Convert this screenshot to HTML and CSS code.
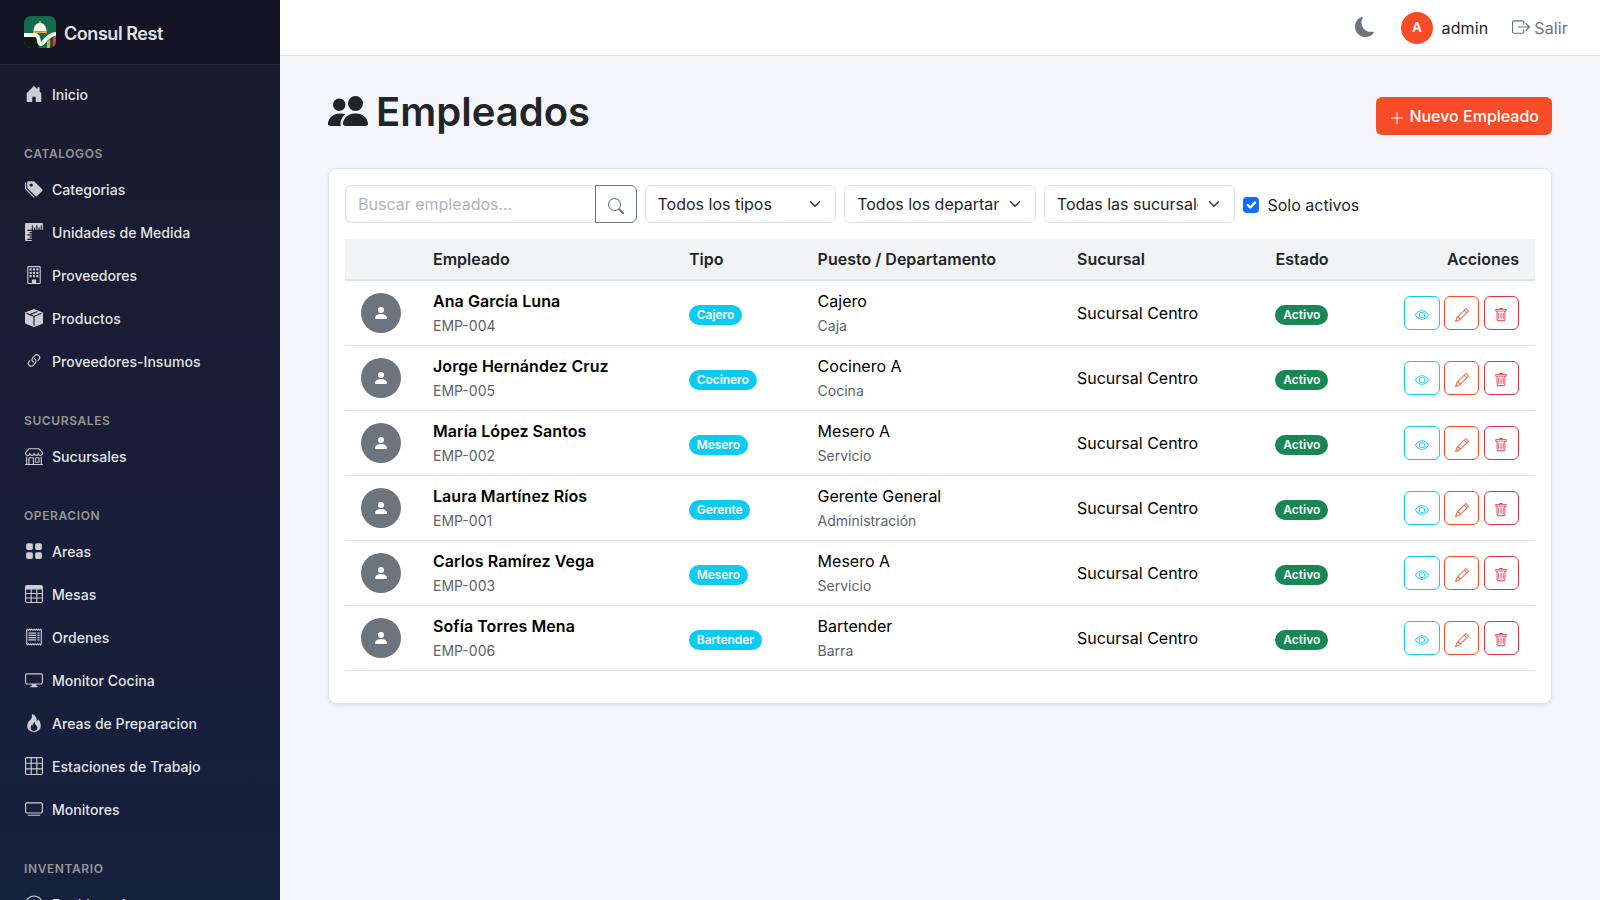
FILE: index.html
```html
<!DOCTYPE html>
<html lang="es">
  <head>
    <meta charset="UTF-8" />
    <meta name="viewport" content="width=device-width, initial-scale=1.0" />
    <title>Empleados - Consul Rest</title>
    <link rel="stylesheet" href="styles.css">
  </head>
  <body>
    <svg class="sprite" viewBox="0 0 16 16">
      <symbol id="i-house" viewBox="0 0 16 16"><path d="M6.5 14.5v-3.505c0-.245.25-.495.5-.495h2c.25 0 .5.25.5.5v3.5a.5.5 0 0 0 .5.5h4a.5.5 0 0 0 .5-.5v-7a.5.5 0 0 0-.146-.354L13 5.793V2.5a.5.5 0 0 0-.5-.5h-1a.5.5 0 0 0-.5.5v1.293L8.354 1.146a.5.5 0 0 0-.708 0l-6 6A.5.5 0 0 0 1.5 7.5v7a.5.5 0 0 0 .5.5h4a.5.5 0 0 0 .5-.5"/></symbol>
      <symbol id="i-tags" viewBox="0 0 16 16"><path d="M2 2a1 1 0 0 1 1-1h4.586a1 1 0 0 1 .707.293l7 7a1 1 0 0 1 0 1.414l-4.586 4.586a1 1 0 0 1-1.414 0l-7-7A1 1 0 0 1 2 6.586zm3.5 4a1.5 1.5 0 1 0 0-3 1.5 1.5 0 0 0 0 3"/><path d="M1.293 7.793A1 1 0 0 1 1 7.086V2a1 1 0 0 0-1 1v4.586a1 1 0 0 0 .293.707l7 7a1 1 0 0 0 1.414 0l.043-.043z"/></symbol>
      <symbol id="i-rulers" viewBox="0 0 16 16"><path d="M1 0a1 1 0 0 0-1 1v14a1 1 0 0 0 1 1h5v-1H2v-1h4v-1H4v-1h2v-1H2v-1h4V9H4V8h2V7H2V6h4V2h1v4h1V4h1v2h1V2h1v4h1V4h1v2h1V2h1v4h1V1a1 1 0 0 0-1-1z"/></symbol>
      <symbol id="i-building" viewBox="0 0 16 16"><path d="M4.500 2h1a.5.5 0 0 1 .5.5v1a.5.5 0 0 1-.5.5h-1a.5.5 0 0 1-.5-.5v-1a.5.5 0 0 1 .5-.5m3 0h1a.5.5 0 0 1 .5.5v1a.5.5 0 0 1-.5.5h-1a.5.5 0 0 1-.5-.5v-1a.5.5 0 0 1 .5-.5m3 0h1a.5.5 0 0 1 .5.5v1a.5.5 0 0 1-.5.5h-1a.5.5 0 0 1-.5-.5v-1a.5.5 0 0 1 .5-.5m-6 3h1a.5.5 0 0 1 .5.5v1a.5.5 0 0 1-.5.5h-1a.5.5 0 0 1-.5-.5v-1a.5.5 0 0 1 .5-.5m3 0h1a.5.5 0 0 1 .5.5v1a.5.5 0 0 1-.5.5h-1a.5.5 0 0 1-.5-.5v-1a.5.5 0 0 1 .5-.5m3 0h1a.5.5 0 0 1 .5.5v1a.5.5 0 0 1-.5.5h-1a.5.5 0 0 1-.5-.5v-1a.5.5 0 0 1 .5-.5m-6 3h1a.5.5 0 0 1 .5.5v1a.5.5 0 0 1-.5.5h-1a.5.5 0 0 1-.5-.5v-1a.5.5 0 0 1 .5-.5m3 0h1a.5.5 0 0 1 .5.5v1a.5.5 0 0 1-.5.5h-1a.5.5 0 0 1-.5-.5v-1a.5.5 0 0 1 .5-.5m3 0h1a.5.5 0 0 1 .5.5v1a.5.5 0 0 1-.5.5h-1a.5.5 0 0 1-.5-.5v-1a.5.5 0 0 1 .5-.5"/><path d="M2 1a1 1 0 0 1 1-1h10a1 1 0 0 1 1 1v14a1 1 0 0 1-1 1H3a1 1 0 0 1-1-1zm11 0H3v14h3v-2.500a.5.5 0 0 1 .5-.5h3a.5.5 0 0 1 .5.5V15h3z"/></symbol>
      <symbol id="i-box" viewBox="0 0 16 16"><path fill-rule="evenodd" d="M15.528 2.973a.75.75 0 0 1 .472.696v8.662a.75.75 0 0 1-.472.696l-7.25 2.9a.75.75 0 0 1-.557 0l-7.25-2.9A.75.75 0 0 1 0 12.331V3.669a.75.75 0 0 1 .471-.696L7.443.184l.01-.003.268-.108a.75.75 0 0 1 .558 0l.269.108.01.003zM10.404 2 4.25 4.461 1.846 3.5 1 3.839v.4l6.5 2.6v7.922l.5.2.5-.2V6.84l6.5-2.6v-.4l-.846-.339L8 5.961 5.596 5l6.154-2.461z"/></symbol>
      <symbol id="i-link" viewBox="0 0 16 16"><path d="M4.715 6.542 3.343 7.914a3 3 0 1 0 4.243 4.243l1.828-1.829A3 3 0 0 0 8.586 5.5L8 6.086a1 1 0 0 0-.154.199 2 2 0 0 1 .861 3.337L6.88 11.45a2 2 0 1 1-2.83-2.83l.793-.792a4 4 0 0 1-.128-1.287z"/><path d="M6.586 4.672A3 3 0 0 0 7.414 9.5l.775-.776a2 2 0 0 1-.896-3.346L9.12 3.55a2 2 0 1 1 2.83 2.83l-.793.792c.112.42.155.855.128 1.287l1.372-1.372a3 3 0 1 0-4.243-4.243z"/></symbol>
      <symbol id="i-shop" viewBox="0 0 16 16"><path d="M2.97 1.35A1 1 0 0 1 3.73 1h8.54a1 1 0 0 1 .76.35l2.609 3.044A1.5 1.5 0 0 1 16 5.37v.255a2.375 2.375 0 0 1-4.25 1.458A2.37 2.37 0 0 1 9.875 8 2.37 2.37 0 0 1 8 7.083 2.37 2.37 0 0 1 6.125 8a2.37 2.37 0 0 1-1.875-.917A2.375 2.375 0 0 1 0 5.625V5.37a1.5 1.5 0 0 1 .361-.976zm1.78 4.275a1.375 1.375 0 0 0 2.75 0 .5.5 0 0 1 1 0 1.375 1.375 0 0 0 2.75 0 .5.5 0 0 1 1 0 1.375 1.375 0 1 0 2.75 0V5.37a.5.5 0 0 0-.12-.325L12.27 2H3.73L1.12 5.045A.5.5 0 0 0 1 5.37v.255a1.375 1.375 0 0 0 2.75 0 .5.5 0 0 1 1 0M1.5 8.5A.5.5 0 0 1 2 9v6h1v-5a1 1 0 0 1 1-1h3a1 1 0 0 1 1 1v5h6V9a.5.5 0 0 1 1 0v6h.5a.5.5 0 0 1 0 1H.5a.5.5 0 0 1 0-1H1V9a.5.5 0 0 1 .5-.5M4 15h3v-5H4zm5-5a1 1 0 0 1 1-1h2a1 1 0 0 1 1 1v3a1 1 0 0 1-1 1h-2a1 1 0 0 1-1-1zm3 0h-2v3h2z"/></symbol>
      <symbol id="i-grid" viewBox="0 0 16 16"><path d="M1 2.5A1.5 1.5 0 0 1 2.5 1h3A1.5 1.5 0 0 1 7 2.5v3A1.5 1.5 0 0 1 5.5 7h-3A1.5 1.5 0 0 1 1 5.5zm8 0A1.5 1.5 0 0 1 10.5 1h3A1.5 1.5 0 0 1 15 2.5v3A1.5 1.5 0 0 1 13.5 7h-3A1.5 1.5 0 0 1 9 5.5zm-8 8A1.5 1.5 0 0 1 2.5 9h3A1.5 1.5 0 0 1 7 10.5v3A1.5 1.5 0 0 1 5.5 15h-3A1.5 1.5 0 0 1 1 13.5zm8 0A1.5 1.5 0 0 1 10.5 9h3a1.5 1.5 0 0 1 1.5 1.5v3a1.5 1.5 0 0 1-1.5 1.5h-3A1.5 1.5 0 0 1 9 13.5z"/></symbol>
      <symbol id="i-table" viewBox="0 0 16 16"><path d="M0 2a2 2 0 0 1 2-2h12a2 2 0 0 1 2 2v12a2 2 0 0 1-2 2H2a2 2 0 0 1-2-2zm15 2h-4v3h4zm0 4h-4v3h4zm0 4h-4v3h3a1 1 0 0 0 1-1zm-5 3v-3H6v3zm-5 0v-3H1v2a1 1 0 0 0 1 1zm-4-4h4V8H1zm0-4h4V4H1zm5-3v3h4V4zm4 4H6v3h4z"/></symbol>
      <symbol id="i-receipt" viewBox="0 0 16 16"><path d="M1.92.506a.5.5 0 0 1 .434.14L3 1.293l.646-.647a.5.5 0 0 1 .708 0L5 1.293l.646-.647a.5.5 0 0 1 .708 0L7 1.293l.646-.647a.5.5 0 0 1 .708 0L9 1.293l.646-.647a.5.5 0 0 1 .708 0l.646.647.646-.647a.5.5 0 0 1 .708 0l.646.647.646-.647a.5.5 0 0 1 .801.13l.5 1A.5.5 0 0 1 15 2v12a.5.5 0 0 1-.053.224l-.5 1a.5.5 0 0 1-.8.13L13 14.707l-.646.647a.5.5 0 0 1-.708 0L11 14.707l-.646.647a.5.5 0 0 1-.708 0L9 14.707l-.646.647a.5.5 0 0 1-.708 0L7 14.707l-.646.647a.5.5 0 0 1-.708 0L5 14.707l-.646.647a.5.5 0 0 1-.708 0L3 14.707l-.646.647a.5.5 0 0 1-.801-.13l-.5-1A.5.5 0 0 1 1 14V2a.5.5 0 0 1 .053-.224l.5-1a.5.5 0 0 1 .367-.27m.217 1.338L2 2.118v11.764l.137.274.51-.51a.5.5 0 0 1 .707 0l.646.647.646-.646a.5.5 0 0 1 .708 0l.646.646.646-.646a.5.5 0 0 1 .708 0l.646.646.646-.646a.5.5 0 0 1 .708 0l.646.646.646-.646a.5.5 0 0 1 .708 0l.646.646.646-.646a.5.5 0 0 1 .708 0l.509.509.137-.274V2.118l-.137-.274-.51.51a.5.5 0 0 1-.707 0L12 1.707l-.646.647a.5.5 0 0 1-.708 0L10 1.707l-.646.647a.5.5 0 0 1-.708 0L8 1.707l-.646.647a.5.5 0 0 1-.708 0L6 1.707l-.646.647a.5.5 0 0 1-.708 0L4 1.707l-.646.647a.5.5 0 0 1-.708 0z"/><path d="M3 4h7v1H3zM3 6h7v1H3zM3 8h7v1H3zM3 10h7v1H3zM11 4h2v1h-2zM11 6h2v1h-2zM11 8h2v1h-2zM11 10h2v1h-2z"/></symbol>
      <symbol id="i-display" viewBox="0 0 16 16"><path d="M0 4s0-2 2-2h12s2 0 2 2v6s0 2-2 2h-4q0 1 .25 1.5H11a.5.5 0 0 1 0 1H5a.5.5 0 0 1 0-1h.75Q6 13 6 12H2s-2 0-2-2zm1.398-.855a.76.76 0 0 0-.254.302A1.5 1.5 0 0 0 1 4.01V10c0 .325.078.502.145.602q.105.156.302.254a1.5 1.5 0 0 0 .538.143L2.01 11H14c.325 0 .502-.078.602-.145a.76.76 0 0 0 .254-.302 1.5 1.5 0 0 0 .143-.538L15 9.99V4c0-.325-.078-.502-.145-.602a.76.76 0 0 0-.302-.254A1.5 1.5 0 0 0 13.99 3H2c-.325 0-.502.078-.602.145"/></symbol>
      <symbol id="i-fire" viewBox="0 0 16 16"><path d="M8 16c3.314 0 6-2 6-5.5 0-1.5-.5-4-2.5-6 .25 1.5-1.25 2-1.25 2C11 4 9 .5 6 0c.357 2 .5 4-2 6-1.25 1-2 2.729-2 4.5C2 14 4.686 16 8 16m0-1c-1.657 0-3-1-3-2.75 0-.75.25-2 1.25-3C6.125 10 7 10.5 7 10.5c-.375-1.25.5-3.25 2-3.5-.179 1-.25 2 1 3 .625.5 1 1.364 1 2.25C11 14 9.657 15 8 15"/></symbol>
      <symbol id="i-grid3" viewBox="0 0 16 16"><path d="M0 1.5A1.5 1.5 0 0 1 1.5 0h13A1.5 1.5 0 0 1 16 1.5v13a1.5 1.5 0 0 1-1.5 1.5h-13A1.5 1.5 0 0 1 0 14.5zM1.500 1a.5.5 0 0 0-.5.5V5h4V1zM5 6H1v4h4zm1 4h4V6H6zm-1 1H1v3.500a.5.5 0 0 0 .5.5H5zm1 0v4h4v-4zm5 0v4h3.500a.5.5 0 0 0 .5-.5V11zm0-1h4V6h-4zm0-5h4V1.500a.5.5 0 0 0-.5-.5H11zm-1 0V1H6v4z"/></symbol>
      <symbol id="i-tv" viewBox="0 0 16 16"><path d="M2.5 13.5A.5.5 0 0 1 3 13h10a.5.5 0 0 1 0 1H3a.5.5 0 0 1-.5-.5M13.991 3l.024.001a1.5 1.5 0 0 1 .538.143.76.76 0 0 1 .302.254c.067.1.145.277.145.602v5.991l-.001.024a1.5 1.5 0 0 1-.143.538.76.76 0 0 1-.254.302c-.1.067-.277.145-.602.145H2.009l-.024-.001a1.5 1.5 0 0 1-.538-.143.76.76 0 0 1-.302-.254C1.078 10.502 1 10.325 1 10V4.009l.001-.024a1.5 1.5 0 0 1 .143-.538.76.76 0 0 1 .254-.302C1.498 3.078 1.675 3 2 3zM14 2H2C0 2 0 4 0 4v6c0 2 2 2 2 2h12c2 0 2-2 2-2V4c0-2-2-2-2-2"/></symbol>
      <symbol id="i-speed" viewBox="0 0 16 16"><path d="M8 4v2M4 6l.9.9M2.500 10.500H4M12 10.500h1.600M8 10.500l3.600-4M3.500 13.800C2 12.800 1 11.500.7 9.500a7.400 7.400 0 1 1 14.600 0c-.3 2-1.300 3.300-2.800 4.300-2.500-1.600-6.500-1.600-9 0z" fill="none" stroke="currentColor"/></symbol>
      <symbol id="i-people" viewBox="0 0 16 16"><path d="M7 14s-1 0-1-1 1-4 5-4 5 3 5 4-1 1-1 1zm4-6a3 3 0 1 0 0-6 3 3 0 0 0 0 6m-5.784 6A2.24 2.24 0 0 1 5 13c0-1.355.68-2.75 1.936-3.72A6.3 6.3 0 0 0 5 9c-4 0-5 3-5 4s1 1 1 1zM4.500 8a2.500 2.500 0 1 0 0-5 2.500 2.500 0 0 0 0 5"/></symbol>
      <symbol id="i-person" viewBox="0 0 16 16"><path d="M3 14s-1 0-1-1 1-4 6-4 6 3 6 4-1 1-1 1zm5-6a3 3 0 1 0 0-6 3 3 0 0 0 0 6"/></symbol>
      <symbol id="i-moon" viewBox="0 0 16 16"><path d="M6 .278a.77.77 0 0 1 .08.858 7.2 7.2 0 0 0-.878 3.46c0 4.021 3.278 7.277 7.318 7.277q.792-.001 1.533-.16a.79.79 0 0 1 .81.316.73.73 0 0 1-.031.893A8.35 8.35 0 0 1 8.344 16C3.734 16 0 12.286 0 7.71 0 4.266 2.114 1.312 5.124.06A.75.75 0 0 1 6 .278"/></symbol>
      <symbol id="i-exit" viewBox="0 0 16 16"><path d="M10 12.500a.5.5 0 0 1-.5.5h-8a.5.5 0 0 1-.5-.5v-9a.5.5 0 0 1 .5-.5h8a.5.5 0 0 1 .5.5v2a.5.5 0 0 0 1 0v-2A1.500 1.500 0 0 0 9.500 2h-8A1.500 1.500 0 0 0 0 3.500v9A1.500 1.500 0 0 0 1.500 14h8a1.500 1.500 0 0 0 1.500-1.500v-2a.5.5 0 0 0-1 0z"/><path d="M15.854 8.354a.5.5 0 0 0 0-.708l-3-3a.5.5 0 0 0-.708.708L14.293 7.500H5.500a.5.5 0 0 0 0 1h8.793l-2.147 2.146a.5.5 0 0 0 .708.708z"/></symbol>
      <symbol id="i-plus" viewBox="0 0 16 16"><path d="M8 2a.5.5 0 0 1 .5.5v5h5a.5.5 0 0 1 0 1h-5v5a.5.5 0 0 1-1 0v-5h-5a.5.5 0 0 1 0-1h5v-5A.5.5 0 0 1 8 2"/></symbol>
      <symbol id="i-search" viewBox="0 0 16 16"><path d="M11.742 10.344a6.500 6.500 0 1 0-1.397 1.398h-.001q.044.06.098.115l3.850 3.850a1 1 0 0 0 1.415-1.414l-3.850-3.850a1 1 0 0 0-.115-.100zM12 6.500a5.500 5.500 0 1 1-11 0 5.500 5.500 0 0 1 11 0"/></symbol>
      <symbol id="i-eye" viewBox="0 0 16 16"><path d="M16 8s-3-5.500-8-5.500S0 8 0 8s3 5.500 8 5.500S16 8 16 8M1.173 8a13 13 0 0 1 1.660-2.043C4.120 4.668 5.880 3.500 8 3.500s3.879 1.168 5.168 2.457A13 13 0 0 1 14.828 8q-.086.130-.195.288c-.335.480-.830 1.120-1.465 1.755C11.879 11.332 10.119 12.500 8 12.500s-3.879-1.168-5.168-2.457A13 13 0 0 1 1.172 8z"/><path d="M8 5.500a2.500 2.500 0 1 0 0 5 2.500 2.500 0 0 0 0-5M4.500 8a3.500 3.500 0 1 1 7 0 3.500 3.500 0 0 1-7 0"/></symbol>
      <symbol id="i-pencil" viewBox="0 0 16 16"><path d="M12.146.146a.5.5 0 0 1 .708 0l3 3a.5.5 0 0 1 0 .708l-10 10a.5.5 0 0 1-.168.110l-5 2a.5.5 0 0 1-.650-.650l2-5a.5.5 0 0 1 .110-.168zM11.207 2.500 13.500 4.793 14.793 3.500 12.500 1.207zm1.586 3L10.500 3.207 4 9.707V10h.5a.5.5 0 0 1 .5.5v.5h.5a.5.5 0 0 1 .5.5v.5h.293zm-9.761 5.175-.106.106-1.528 3.821 3.821-1.528.106-.106A.5.5 0 0 1 5 12.500V12h-.5a.5.5 0 0 1-.5-.5V11h-.5a.5.5 0 0 1-.468-.325"/></symbol>
      <symbol id="i-trash" viewBox="0 0 16 16"><path d="M5.500 5.500A.5.5 0 0 1 6 6v6a.5.5 0 0 1-1 0V6a.5.5 0 0 1 .5-.5m2.500 0a.5.5 0 0 1 .5.5v6a.5.5 0 0 1-1 0V6a.5.5 0 0 1 .5-.5m3 .5a.5.5 0 0 0-1 0v6a.5.5 0 0 0 1 0z"/><path d="M14.500 3a1 1 0 0 1-1 1H13v9a2 2 0 0 1-2 2H5a2 2 0 0 1-2-2V4h-.5a1 1 0 0 1-1-1V2a1 1 0 0 1 1-1H6a1 1 0 0 1 1-1h2a1 1 0 0 1 1 1h3.500a1 1 0 0 1 1 1zM4.118 4 4 4.059V13a1 1 0 0 0 1 1h6a1 1 0 0 0 1-1V4.059L11.882 4zM2.500 3h11V2h-11z"/></symbol>
    </svg>

    <aside class="sidebar">
      <a href="#" class="brand">
        <svg class="brand-logo" viewBox="0 0 32 32">
          <defs><clipPath id="logo-clip"><rect width="32" height="32" rx="7"/></clipPath></defs>
          <g clip-path="url(#logo-clip)">
            <rect width="32" height="32" fill="#116c4c"/>
            <path d="M0 20h12l3 12H0z" fill="#111a18"/>
            <path d="M23 26l3-3v9h-3z" fill="#e0a94a"/>
            <path d="M27 22.500l5-4V32h-5z" fill="#123d30"/>
            <path d="M28.500 21.500L32 18.500V31h-3.500z" fill="#d8432f"/>
            <path d="M9 15.300h14v1.700H9z" fill="#e0a94a"/>
            <circle cx="16" cy="6.500" r="1.300" fill="#e0a94a"/>
            <path d="M9.500 15c0-4.500 2.800-8 6.500-8s6.500 3.500 6.500 8z" fill="#fffaf0"/>
            <path d="M0 19h11c2.500 0 3 1.500 3.500 4 .8 5 1.800 6.500 4 4.200C22 23.500 25 18 32 17.800" fill="none" stroke="#fffaf0" stroke-width="3.800"/>
          </g>
        </svg>
        <span>Consul Rest</span>
      </a>
      <nav class="menu">
        <a href="#"><svg><use href="#i-house"/></svg>Inicio</a>
        <div class="menu-title">Catalogos</div>
        <a href="#"><svg><use href="#i-tags"/></svg>Categorias</a>
        <a href="#"><svg><use href="#i-rulers"/></svg>Unidades de Medida</a>
        <a href="#"><svg><use href="#i-building"/></svg>Proveedores</a>
        <a href="#"><svg><use href="#i-box"/></svg>Productos</a>
        <a href="#"><svg><use href="#i-link"/></svg>Proveedores-Insumos</a>
        <div class="menu-title">Sucursales</div>
        <a href="#"><svg><use href="#i-shop"/></svg>Sucursales</a>
        <div class="menu-title">Operacion</div>
        <a href="#"><svg><use href="#i-grid"/></svg>Areas</a>
        <a href="#"><svg><use href="#i-table"/></svg>Mesas</a>
        <a href="#"><svg><use href="#i-receipt"/></svg>Ordenes</a>
        <a href="#"><svg><use href="#i-display"/></svg>Monitor Cocina</a>
        <a href="#"><svg><use href="#i-fire"/></svg>Areas de Preparacion</a>
        <a href="#"><svg><use href="#i-grid3"/></svg>Estaciones de Trabajo</a>
        <a href="#"><svg><use href="#i-tv"/></svg>Monitores</a>
        <div class="menu-title">Inventario</div>
        <a href="#"><svg><use href="#i-speed"/></svg>Dashboard</a>
      </nav>
    </aside>

    <div class="page">
      <header class="topbar">
        <button class="theme-btn"><svg><use href="#i-moon"/></svg></button>
        <div class="user">
          <span class="user-avatar">A</span>
          <span>admin</span>
        </div>
        <a href="#" class="logout"><svg><use href="#i-exit"/></svg>Salir</a>
      </header>

      <main class="content">
        <div class="page-header">
          <h1><svg><use href="#i-people"/></svg>Empleados</h1>
          <button class="btn-new"><svg><use href="#i-plus"/></svg>Nuevo Empleado</button>
        </div>

        <div class="card">
          <div class="filters">
            <div class="search">
              <input type="text" placeholder="Buscar empleados..." />
              <button><svg><use href="#i-search"/></svg></button>
            </div>
            <select><option>Todos los tipos</option></select>
            <select><option>Todos los departamentos</option></select>
            <select><option>Todas las sucursales</option></select>
            <label class="check"><input type="checkbox" checked />Solo activos</label>
          </div>

          <table>
            <colgroup>
              <col class="col-avatar" />
              <col class="col-name" />
              <col class="col-type" />
              <col class="col-job" />
              <col class="col-branch" />
              <col class="col-status" />
              <col />
            </colgroup>
            <thead>
              <tr>
                <th></th>
                <th>Empleado</th>
                <th>Tipo</th>
                <th>Puesto / Departamento</th>
                <th>Sucursal</th>
                <th>Estado</th>
                <th class="right">Acciones</th>
              </tr>
            </thead>
            <tbody>
              <tr>
                <td><div class="avatar"><svg><use href="#i-person"/></svg></div></td>
                <td><strong>Ana García Luna</strong><br /><small>EMP-004</small></td>
                <td><span class="badge info">Cajero</span></td>
                <td>Cajero<br /><small>Caja</small></td>
                <td>Sucursal Centro</td>
                <td><span class="badge success">Activo</span></td>
                <td>
                  <div class="actions">
                    <button class="view"><svg><use href="#i-eye"/></svg></button>
                    <button class="edit"><svg><use href="#i-pencil"/></svg></button>
                    <button class="delete"><svg><use href="#i-trash"/></svg></button>
                  </div>
                </td>
              </tr>
              <tr>
                <td><div class="avatar"><svg><use href="#i-person"/></svg></div></td>
                <td><strong>Jorge Hernández Cruz</strong><br /><small>EMP-005</small></td>
                <td><span class="badge info">Cocinero</span></td>
                <td>Cocinero A<br /><small>Cocina</small></td>
                <td>Sucursal Centro</td>
                <td><span class="badge success">Activo</span></td>
                <td>
                  <div class="actions">
                    <button class="view"><svg><use href="#i-eye"/></svg></button>
                    <button class="edit"><svg><use href="#i-pencil"/></svg></button>
                    <button class="delete"><svg><use href="#i-trash"/></svg></button>
                  </div>
                </td>
              </tr>
              <tr>
                <td><div class="avatar"><svg><use href="#i-person"/></svg></div></td>
                <td><strong>María López Santos</strong><br /><small>EMP-002</small></td>
                <td><span class="badge info">Mesero</span></td>
                <td>Mesero A<br /><small>Servicio</small></td>
                <td>Sucursal Centro</td>
                <td><span class="badge success">Activo</span></td>
                <td>
                  <div class="actions">
                    <button class="view"><svg><use href="#i-eye"/></svg></button>
                    <button class="edit"><svg><use href="#i-pencil"/></svg></button>
                    <button class="delete"><svg><use href="#i-trash"/></svg></button>
                  </div>
                </td>
              </tr>
              <tr>
                <td><div class="avatar"><svg><use href="#i-person"/></svg></div></td>
                <td><strong>Laura Martínez Ríos</strong><br /><small>EMP-001</small></td>
                <td><span class="badge info">Gerente</span></td>
                <td>Gerente General<br /><small>Administración</small></td>
                <td>Sucursal Centro</td>
                <td><span class="badge success">Activo</span></td>
                <td>
                  <div class="actions">
                    <button class="view"><svg><use href="#i-eye"/></svg></button>
                    <button class="edit"><svg><use href="#i-pencil"/></svg></button>
                    <button class="delete"><svg><use href="#i-trash"/></svg></button>
                  </div>
                </td>
              </tr>
              <tr>
                <td><div class="avatar"><svg><use href="#i-person"/></svg></div></td>
                <td><strong>Carlos Ramírez Vega</strong><br /><small>EMP-003</small></td>
                <td><span class="badge info">Mesero</span></td>
                <td>Mesero A<br /><small>Servicio</small></td>
                <td>Sucursal Centro</td>
                <td><span class="badge success">Activo</span></td>
                <td>
                  <div class="actions">
                    <button class="view"><svg><use href="#i-eye"/></svg></button>
                    <button class="edit"><svg><use href="#i-pencil"/></svg></button>
                    <button class="delete"><svg><use href="#i-trash"/></svg></button>
                  </div>
                </td>
              </tr>
              <tr>
                <td><div class="avatar"><svg><use href="#i-person"/></svg></div></td>
                <td><strong>Sofía Torres Mena</strong><br /><small>EMP-006</small></td>
                <td><span class="badge info">Bartender</span></td>
                <td>Bartender<br /><small>Barra</small></td>
                <td>Sucursal Centro</td>
                <td><span class="badge success">Activo</span></td>
                <td>
                  <div class="actions">
                    <button class="view"><svg><use href="#i-eye"/></svg></button>
                    <button class="edit"><svg><use href="#i-pencil"/></svg></button>
                    <button class="delete"><svg><use href="#i-trash"/></svg></button>
                  </div>
                </td>
              </tr>
            </tbody>
          </table>
        </div>
      </main>
    </div>
  </body>
</html>
```

FILE: styles.css
```css
* {
  margin: 0;
  padding: 0;
  box-sizing: border-box;
}

body {
  display: flex;
  height: 100vh;
  overflow: hidden;
  font-family: Inter, "Liberation Sans", sans-serif;
  font-size: 16px;
  line-height: 1.5;
  color: #212529;
  background-color: #f4f6fb;
}

button,
input,
select {
  font: inherit;
  color: inherit;
}

a {
  text-decoration: none;
}

svg {
  width: 16px;
  height: 16px;
  flex-shrink: 0;
  fill: currentColor;
}

.sprite {
  display: none;
}

/* Sidebar */
.sidebar {
  width: 280px;
  height: 100vh;
  flex-shrink: 0;
  overflow: hidden;
  background: linear-gradient(180deg, #1a1a2e 0%, #16213e 100%);
}

.brand {
  display: flex;
  align-items: center;
  gap: 8px;
  height: 65px;
  padding: 0 24px;
  color: rgba(255, 255, 255, 0.9);
  font-size: 18px;
  font-weight: 600;
  letter-spacing: -0.45px;
  background-color: rgba(0, 0, 0, 0.2);
  border-bottom: 1px solid rgba(255, 255, 255, 0.1);
}

.brand span {
  padding-top: 2px;
}

.brand-logo {
  width: 32px;
  height: 32px;
}

.menu {
  padding-top: 8px;
}

.menu a {
  display: flex;
  align-items: center;
  gap: 9px;
  height: 43px;
  padding: 0 25px;
  color: rgba(255, 255, 255, 0.9);
  font-size: 14.08px;
  font-weight: 500;
}

.menu svg {
  width: 18px;
  height: 18px;
  margin-top: -2px;
  color: rgba(255, 255, 255, 0.78);
}

.menu-title {
  height: 52px;
  padding: 29px 24px 0;
  color: #969696;
  font-size: 12px;
  font-weight: 600;
  line-height: 18px;
  letter-spacing: 0.6px;
  text-transform: uppercase;
}

/* Topbar */
.page {
  flex: 1;
  min-width: 0;
}

.topbar {
  display: flex;
  justify-content: flex-end;
  align-items: center;
  height: 56px;
  padding: 0 32px;
  background-color: white;
  border-bottom: 1px solid #dee2e6;
}

.theme-btn {
  display: flex;
  margin-right: 26px;
  background: none;
  border: none;
  color: #6c757d;
}

.theme-btn svg {
  width: 20px;
  height: 20px;
  margin-top: -2px;
}

.user {
  display: flex;
  align-items: center;
  gap: 8.5px;
  margin-right: 24px;
  letter-spacing: 0.1px;
}

.user-avatar {
  display: flex;
  align-items: center;
  justify-content: center;
  width: 32px;
  height: 32px;
  border-radius: 50%;
  background-color: #f84b28;
  color: white;
  font-size: 13.6px;
  font-weight: 600;
}

.logout {
  display: flex;
  align-items: center;
  gap: 4px;
  color: #6c757d;
  letter-spacing: 0.15px;
}

.logout svg {
  width: 18px;
  height: 18px;
  margin-top: -2px;
}

/* Content */
.content {
  padding: 32px 48px;
}

.page-header {
  display: flex;
  justify-content: space-between;
  align-items: center;
  height: 56px;
  margin-bottom: 24px;
}

h1 {
  display: flex;
  align-items: center;
  gap: 8px;
  font-size: 40px;
  font-weight: 600;
  line-height: 48px;
  margin-top: -8px;
}

h1 svg {
  width: 40px;
  height: 40px;
  margin-top: -2px;
}

.btn-new {
  display: flex;
  align-items: center;
  gap: 4px;
  height: 38px;
  padding: 0 13px;
  border: none;
  border-radius: 6px;
  background-color: #f84b28;
  color: white;
  font-weight: 500;
}

.btn-new svg {
  margin-top: 3px;
}

.card {
  height: 536px;
  padding: 16px;
  background-color: white;
  border: 1px solid #dee2e6;
  border-radius: 8px;
  box-shadow: 0 2px 4px rgba(0, 0, 0, 0.075);
}

.filters {
  display: grid;
  grid-template-columns: 291.5px repeat(3, 191.67px) auto;
  column-gap: 8px;
  height: 38px;
  margin-bottom: 16px;
}

.search {
  display: flex;
}

.search input {
  flex: 1;
  min-width: 0;
  padding: 0 12px;
  border: 1px solid #dee2e6;
  border-right: none;
  border-radius: 6px 0 0 6px;
}

.search input::placeholder {
  color: #adb5bd;
}

.search button {
  display: flex;
  align-items: center;
  justify-content: center;
  width: 42px;
  padding-top: 3px;
  background: none;
  border: 1px solid #6c757d;
  border-radius: 0 6px 6px 0;
  color: #6c757d;
}

select {
  width: 100%;
  height: 38px;
  padding: 0 36px 0 12px;
  appearance: none;
  border: 1px solid #dee2e6;
  border-radius: 6px;
  background: white url("data:image/svg+xml,%3csvg xmlns='http://www.w3.org/2000/svg' viewBox='0 0 16 16'%3e%3cpath fill='none' stroke='%23343a40' stroke-linecap='round' stroke-linejoin='round' stroke-width='2' d='m2 5 6 6 6-6'/%3e%3c/svg%3e") no-repeat right 12px center;
  background-size: 16px 12px;
}

.check {
  display: flex;
  align-items: center;
  gap: 8px;
  padding-top: 2px;
}

.check input {
  width: 16px;
  height: 16px;
  appearance: none;
  border-radius: 4px;
  background: #0d6efd url("data:image/svg+xml,%3csvg xmlns='http://www.w3.org/2000/svg' viewBox='0 0 20 20'%3e%3cpath fill='none' stroke='%23fff' stroke-linecap='round' stroke-linejoin='round' stroke-width='3' d='m6 10 3 3 6-6'/%3e%3c/svg%3e") center / contain no-repeat;
}

/* Table */
table {
  width: 100%;
  table-layout: fixed;
  border-collapse: separate;
  border-spacing: 0;
}

.col-avatar {
  width: 72px;
}

.col-name {
  width: 256px;
}

.col-type {
  width: 128.6px;
}

.col-job {
  width: 259.4px;
}

.col-branch {
  width: 198.5px;
}

.col-status {
  width: 120px;
}

th {
  height: 42px;
  padding: 0 16px;
  text-align: left;
  font-weight: 600;
  background-color: #f1f3f5;
  border-bottom: 2px solid #dee2e6;
}

th.right {
  text-align: right;
}

td {
  height: 65px;
  padding: 8px 16px;
  vertical-align: middle;
  color: black;
  border-bottom: 1px solid #dee2e6;
}

strong {
  font-weight: 600;
  letter-spacing: 0.06px;
}

small {
  font-size: 14px;
  color: #5c636a;
}

.avatar {
  display: flex;
  align-items: center;
  justify-content: center;
  width: 40px;
  height: 40px;
  border-radius: 50%;
  background-color: #6c757d;
  color: white;
}

.badge {
  display: inline-block;
  padding: 4.2px 7.8px;
  border-radius: 50px;
  color: white;
  font-size: 12px;
  font-weight: 600;
  line-height: 1;
}

.info {
  background-color: #0dcaf0;
  letter-spacing: -0.07px;
}

.success {
  background-color: #198754;
}

.actions {
  display: flex;
  justify-content: flex-end;
  gap: 4.5px;
}

.actions button {
  display: flex;
  align-items: center;
  justify-content: center;
  width: 35.2px;
  height: 34px;
  padding-top: 3px;
  background: none;
  border: 1px solid;
  border-radius: 6px;
}

.actions svg {
  width: 14px;
  height: 14px;
}

.actions .view {
  color: #0dcaf0;
}

.actions .edit {
  color: #f84b28;
}

.actions .delete {
  color: #dc3545;
}
```
